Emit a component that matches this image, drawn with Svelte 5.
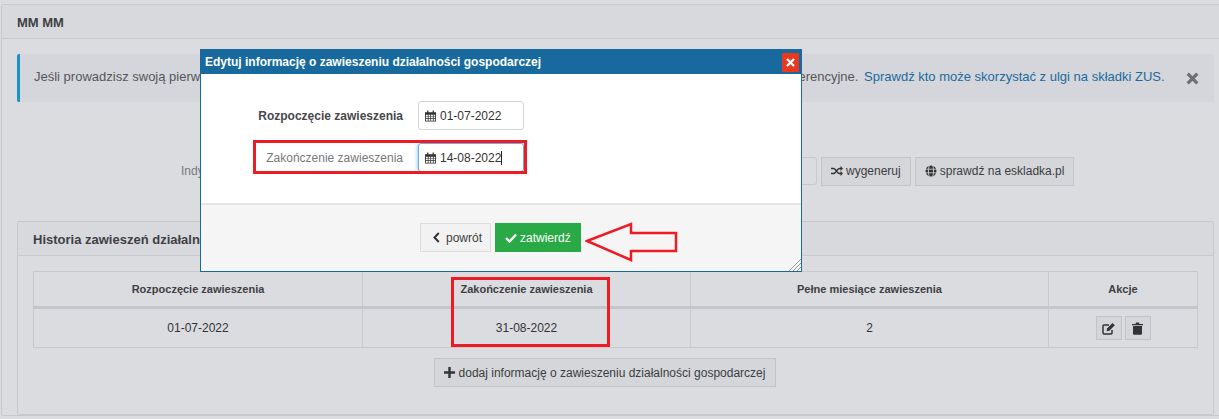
<script>
  const columns = ['Rozpoczęcie zawieszenia', 'Zakończenie zawieszenia', 'Pełne miesiące zawieszenia', 'Akcje'];
  const row = { from: '01-07-2022', to: '31-08-2022', months: 2 };
</script>

{#snippet calendar()}
  <svg class="cal" viewBox="0 0 13 13" width="11" height="12">
    <path fill="#333" fill-rule="evenodd" d="M2.500 0h1.500v2h5V0h1.500v2H13v11H0V2h2.500zM1 5v1.700h2.300V5zm3.200 0v1.700h2.100V5zm3 0v1.700h2.100V5zm3 0v1.700H12V5zM1 7.500v1.700h2.300V7.500zm3.200 0v1.700h2.100V7.500zm3 0v1.700h2.100V7.500zm3 0v1.700H12V7.500zM1 10v2h2.300v-2zm3.200 0v2h2.100v-2zm3 0v2h2.100v-2zm3 0v2H12v-2z"/>
  </svg>
{/snippet}

<div class="page">
  <section class="panel outer">
    <h2 class="head">MM MM</h2>
    <div class="outer-body">
      <div class="alert">
        <p>Jeśli prowadzisz swoją pierwszą działalność gospodarczą, możesz skorzystać z ulgi na start oraz przez dwa lata opłacać składki preferencyjne. <a href="#ulga">Sprawdź kto może skorzystać z ulgi na składki ZUS.</a></p>
        <svg class="alert-x" viewBox="0 0 13 13" width="13" height="13">
          <path d="M1.700 1.700l9.600 9.600M11.300 1.700l-9.600 9.600" stroke="#6e6f72" stroke-width="3.200" fill="none"/>
        </svg>
      </div>

      <div class="number-row">
        <span class="number-label">Indywidualny numer rachunku składkowego</span>
        <span class="number-input"></span>
        <button class="btn">
          <svg viewBox="0 0 12 10" width="12" height="10">
            <path d="M0 2.500h2.500c2.500 0 3.500 5 6 5H10M0 7.500h2.500c2.500 0 3.500-5 6-5H10" stroke="#333" stroke-width="1.500" fill="none"/>
            <path d="M9.500 0L12 2.500 9.500 5zM9.500 5L12 7.500 9.500 10z" fill="#333"/>
          </svg>
          wygeneruj
        </button>
        <button class="btn">
          <svg viewBox="0 0 12 12" width="12" height="12">
            <circle cx="6" cy="6" r="5.500" fill="#333"/>
            <path d="M0 4.200h12M0 7.800h12M4.200 0.500c-1 3-1 8 0 11M7.800 0.500c1 3 1 8 0 11" stroke="#dbdcdf" stroke-width="0.800" fill="none"/>
          </svg>
          sprawdź na eskladka.pl
        </button>
      </div>

      <section class="panel inner">
        <h3 class="head">Historia zawieszeń działalności gospodarczej</h3>
        <div class="inner-body">
          <table>
            <thead>
              <tr>
                {#each columns as col}
                  <th>{col}</th>
                {/each}
              </tr>
            </thead>
            <tbody>
              <tr>
                <td>{row.from}</td>
                <td>{row.to}</td>
                <td>{row.months}</td>
                <td>
                  <div class="actions">
                    <button class="btn icon" aria-label="edytuj">
                      <svg viewBox="0 0 14 13" width="14" height="13">
                        <path d="M10 8v3a1 1 0 0 1-1 1H2a1 1 0 0 1-1-1V4a1 1 0 0 1 1-1h5" stroke="#333" stroke-width="1.500" fill="none"/>
                        <path d="M5 6.500L10.500 1l2.300 2.300L7.300 8.800 4.700 9.200z" fill="#333"/>
                      </svg>
                    </button>
                    <button class="btn icon" aria-label="usuń">
                      <svg viewBox="0 0 11 13" width="11" height="13">
                        <path d="M0 2h3.500l.5-1.500h3L7.500 2H11v1.300H0zM1 4h9v7.800a1 1 0 0 1-1 1H2a1 1 0 0 1-1-1z" fill="#333"/>
                      </svg>
                    </button>
                  </div>
                </td>
              </tr>
            </tbody>
          </table>
          <button class="btn add">
            <svg viewBox="0 0 11 11" width="11" height="11">
              <path d="M5.500 0v11M0 5.500h11" stroke="#333" stroke-width="2.400" fill="none"/>
            </svg>
            dodaj informację o zawieszeniu działalności gospodarczej
          </button>
        </div>
      </section>
    </div>
  </section>
</div>

<div class="modal">
  <header class="modal-title">
    <span>Edytuj informację o zawieszeniu działalności gospodarczej</span>
    <button class="modal-close" aria-label="zamknij">
      <svg viewBox="0 0 9 9" width="9" height="9">
        <path d="M1 1l7 7M8 1L1 8" stroke="#fff" stroke-width="2.400" fill="none"/>
      </svg>
    </button>
  </header>
  <div class="modal-body">
    <div class="field">
      <label class="strong" for="date-from">Rozpoczęcie zawieszenia</label>
      <div class="date" id="date-from">{@render calendar()}<span>01-07-2022</span></div>
    </div>
    <div class="field">
      <label for="date-to">Zakończenie zawieszenia</label>
      <div class="date focus" id="date-to">{@render calendar()}<span class="caret">14-08-2022</span></div>
    </div>
  </div>
  <footer class="modal-foot">
    <button class="btn back">
      <svg viewBox="0 0 7 11" width="7" height="11">
        <path d="M5.800 1L1.500 5.500l4.300 4.500" stroke="#333" stroke-width="2" fill="none"/>
      </svg>
      powrót
    </button>
    <button class="btn ok">
      <svg viewBox="0 0 12 10" width="12" height="10">
        <path d="M1 5l3.500 3.500L11 1.500" stroke="#fff" stroke-width="2.400" fill="none"/>
      </svg>
      zatwierdź
    </button>
  </footer>
  <svg class="grip" viewBox="0 0 13 13" width="13" height="13">
    <path d="M13 1L1 13M13 5L5 13M13 9L9 13" stroke="#9a9a9a" stroke-width="1" fill="none"/>
  </svg>
</div>

<!-- annotations drawn over the screenshot -->
<div class="mark mark-field"></div>
<div class="mark mark-cell"></div>
<svg class="arrow" viewBox="0 0 96 40" width="96" height="40">
  <path d="M2 19L46 2v9h45v18H46v9z" fill="none" stroke="#ed1c24" stroke-width="2.500"/>
</svg>

<style>
  :global(body) {
    margin: 0;
    background: #dbdcdf;
  }
  .page {
    width: 1219px;
    height: 419px;
    overflow: hidden;
    box-sizing: border-box;
    padding: 4px 0 0 1px;
    font-family: "Liberation Sans", Arial, sans-serif;
    font-size: 12px;
    color: #3d3d40;
  }
  .panel {
    border: 1px solid #c7c9cc;
    border-radius: 2px;
  }
  .outer {
    width: 1240px;
  }
  .head {
    margin: 0;
    background: #d7d9dd;
    border-bottom: 1px solid #c7c9cc;
    height: 33px;
    line-height: 35px;
    font-size: 13px;
    font-weight: bold;
    color: #3f3f44;
  }
  .outer > .head {
    padding-left: 15px;
  }
  .outer-body {
    padding: 15px 3px 0 15px;
  }
  .alert {
    display: flex;
    align-items: center;
    height: 48px;
    width: 1197px;
    box-sizing: border-box;
    border-left: 3px solid #1a94c6;
    border-radius: 2px;
    background: #d4d6db;
    padding-left: 14px;
    font-size: 13px;
    color: #55565a;
  }
  .alert p {
    margin: 0 0 4px;
    width: 1152px;
    flex: none;
    white-space: nowrap;
  }
  .alert a {
    margin-left: 2px;
    color: #1c6a9e;
    text-decoration: none;
  }
  .number-row {
    display: flex;
    align-items: center;
    height: 28px;
    margin-top: 55px;
    padding-left: 164px;
  }
  .number-label {
    width: 400px;
    flex: none;
    color: #77787b;
  }
  .number-input {
    width: 234px;
    height: 26px;
    border: 1px solid #c7c9cc;
    border-radius: 3px;
    margin-right: 4px;
  }
  .btn {
    display: inline-flex;
    align-items: center;
    gap: 3px;
    height: 29px;
    box-sizing: border-box;
    padding: 0 9px;
    margin: 0 4px 0 0;
    border: 1px solid #c2c4c8;
    background: #d4d6da;
    border-radius: 0;
    font-family: inherit;
    font-size: 12px;
    color: #3d3d40;
  }
  .inner {
    margin-top: 36px;
    width: 1197px;
    height: 194px;
    box-sizing: border-box;
  }
  .inner > .head {
    padding-left: 15px;
    color: #3f3f44;
  }
  .inner-body {
    padding: 15px;
    display: flex;
    flex-direction: column;
    align-items: center;
  }
  table {
    width: 1165px;
    border-collapse: collapse;
    table-layout: fixed;
  }
  th, td {
    border: 1px solid #c7c9cc;
    text-align: center;
    padding: 0;
  }
  th {
    height: 34px;
    font-size: 11px;
    font-weight: bold;
    color: #3f3f44;
    border-bottom: 3px solid #c3c6ca;
  }
  th:nth-child(1) { width: 328px; }
  th:nth-child(2) { width: 327px; }
  th:nth-child(3) { width: 357px; }
  td {
    height: 38px;
    color: #333336;
  }
  .actions {
    display: flex;
    justify-content: center;
    gap: 3px;
  }
  .btn.icon {
    width: 26px;
    height: 24px;
    margin: 0;
    padding: 0;
    justify-content: center;
  }
  .btn.add {
    margin: 10px 22px 0 0;
    width: 342px;
    justify-content: center;
    padding: 0;
    gap: 4px;
  }

  .modal {
    position: absolute;
    left: 200px;
    top: 49px;
    width: 602px;
    height: 223px;
    box-sizing: border-box;
    border: 1px solid #186a9e;
    background: #fff;
    display: flex;
    flex-direction: column;
    font-family: "Liberation Sans", Arial, sans-serif;
    font-size: 12px;
    color: #3d3d40;
  }
  .modal-title {
    display: flex;
    align-items: center;
    justify-content: space-between;
    height: 24px;
    flex: none;
    padding: 0 2px 0 4px;
    background: #186a9e;
    color: #fff;
    font-weight: bold;
  }
  .modal-close {
    width: 17px;
    height: 19px;
    padding: 0;
    border: 0;
    background: #e8391f;
    display: flex;
    align-items: center;
    justify-content: center;
  }
  .modal-body {
    height: 131px;
    flex: none;
    box-sizing: border-box;
    padding-top: 27px;
    display: flex;
    flex-direction: column;
    gap: 13px;
    border-bottom: 2px solid #e6e6e6;
  }
  .field {
    display: flex;
    align-items: center;
    height: 29px;
  }
  .field label {
    width: 202px;
    flex: none;
    text-align: right;
    color: #77787b;
  }
  .field label.strong {
    font-weight: bold;
    color: #48484c;
  }
  .date {
    display: flex;
    align-items: center;
    gap: 4px;
    width: 106px;
    height: 29px;
    box-sizing: border-box;
    margin-left: 15px;
    padding-left: 6px;
    border: 1px solid #d4d4d4;
    border-radius: 3px;
    color: #333;
  }
  .date.focus {
    border-color: #66afe9;
    box-shadow: 0 0 4px rgba(102, 175, 233, 0.900);
  }
  .caret {
    border-right: 1px solid #222;
  }
  .modal-foot {
    flex: 1;
    position: relative;
    background: #f5f5f5;
    display: flex;
    justify-content: center;
    padding-top: 18px;
    box-sizing: border-box;
    gap: 4px;
    padding-right: 1px;
  }
  .btn.back, .btn.ok {
    margin: 0;
    padding: 0 9px;
  }
  .btn.back {
    width: 71px;
    background: #f2f2f2;
    border-color: #dcdcdc;
    gap: 6px;
    padding: 0 8px 0 12px;
  }
  .btn.ok {
    width: 86px;
    background: #29aa46;
    border-color: #29aa46;
    color: #fff;
  }
  .grip {
    position: absolute;
    right: 0;
    bottom: 0;
  }
  .mark {
    position: absolute;
    box-sizing: border-box;
    border: 3px solid #ed1c24;
  }
  .mark-field {
    left: 253px;
    top: 140px;
    width: 274px;
    height: 34px;
  }
  .mark-cell {
    left: 451px;
    top: 277px;
    width: 159px;
    height: 70px;
  }
  .arrow {
    position: absolute;
    left: 585px;
    top: 222px;
  }
</style>
